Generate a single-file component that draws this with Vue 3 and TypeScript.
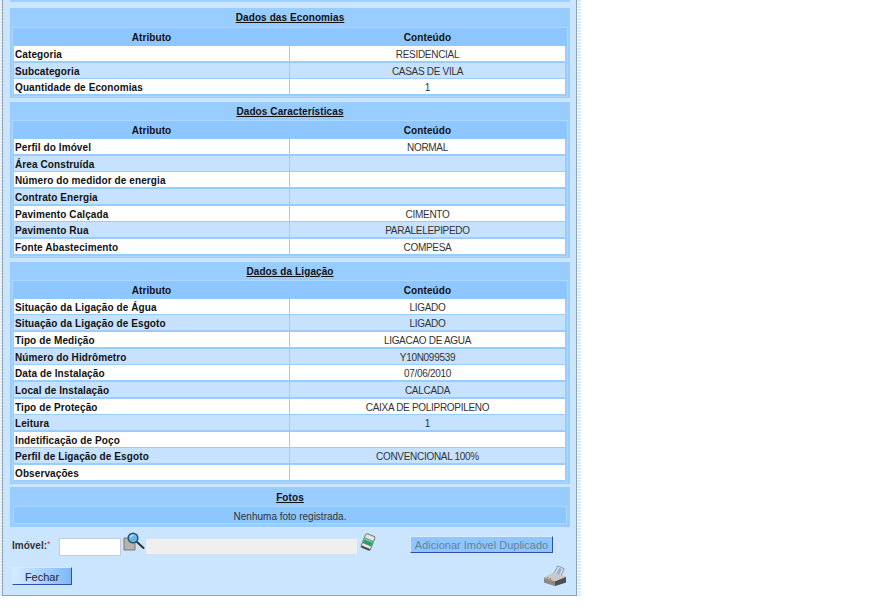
<template>
  <div class="page">
    <div class="shell">
      <div class="panel">
        <div class="stub"></div>

        <section v-for="sec in sections" :key="sec.title" class="sec" :class="sec.cls">
          <h3 class="sec__title"><span>{{ sec.title }}</span></h3>
          <div class="tbl">
            <div class="tbl__head">
              <div>Atributo</div>
              <div>Conteúdo</div>
            </div>
            <div v-for="(row, i) in sec.rows" :key="row[0]" class="tbl__row" :class="{ 'tbl__row--alt': i % 2 === 1 }">
              <div class="tbl__k">{{ row[0] }}</div>
              <div class="tbl__v">{{ row[1] }}</div>
            </div>
          </div>
        </section>

        <section class="sec sec--fotos">
          <h3 class="sec__title"><span>Fotos</span></h3>
          <div class="fotos__msg">Nenhuma foto registrada.</div>
        </section>

        <div class="imovel">
          <label class="imovel__label">Imóvel:<em>*</em></label>
          <input class="imovel__code" type="text" />
          <svg class="imovel__search" width="22" height="19" viewBox="0 0 22 19">
            <path d="M1 6h9l2 2v10H1z" fill="#b4b4ae" stroke="#7a7a72" stroke-width="1" />
            <path d="M14 10l6.500 6" stroke="#2f3438" stroke-width="2" stroke-linecap="round" />
            <circle cx="10" cy="6" r="4.800" fill="#6fb4dc" stroke="#1f5c85" stroke-width="1.600" />
            <path d="M7.500 5.500a3 3 0 0 1 3-2" stroke="#d8eefa" stroke-width="1.200" fill="none" />
          </svg>
          <input class="imovel__desc" type="text" disabled />
          <svg class="imovel__eraser" width="16" height="18" viewBox="0 0 16 18">
            <g transform="rotate(22 8 9)">
              <rect x="3" y="1.500" width="10" height="15" rx="2" fill="#e4e6e4" stroke="#77807c" stroke-width="1" />
              <rect x="3.500" y="6" width="9" height="6" fill="#2f9a6a" />
              <path d="M3.500 7.500h9" stroke="#8fd0ae" stroke-width="1.200" />
              <path d="M3.500 15.500h9" stroke="#3c4442" stroke-width="1.600" />
            </g>
          </svg>
          <button class="btn btn--off" type="button" disabled>Adicionar Imóvel Duplicado</button>
        </div>

        <div class="foot">
          <button class="btn btn--close" type="button">Fechar</button>
          <svg class="foot__print" width="24" height="22" viewBox="0 0 26 24">
            <path d="M11 11L16 1l7 3-4 9z" fill="#d9e0ea" stroke="#8a9099" stroke-width="1" />
            <path d="M14 10l3.500-7 3 1.300-3 6.700z" fill="#8fb2dc" />
            <path d="M1 14l11-6 13 5v6l-12 4-12-4z" fill="#a8a8a8" />
            <path d="M1 14l12 4 12-5-13-5z" fill="#c9c9c9" />
            <path d="M13 18v5l12-4v-6z" fill="#4f4f4f" />
            <path d="M1 14v5l12 4v-5z" fill="#8a8a8a" />
            <circle cx="5" cy="14" r="0.900" fill="#4fa84f" />
            <circle cx="8" cy="15" r="0.900" fill="#c85a4a" />
          </svg>
        </div>
      </div>
    </div>
  </div>
</template>

<script setup lang="ts">
interface Section {
  title: string;
  cls: string;
  rows: [string, string][];
}

const sections: Section[] = [
  {
    title: 'Dados das Economias',
    cls: 'sec--eco',
    rows: [
      ['Categoria', 'RESIDENCIAL'],
      ['Subcategoria', 'CASAS DE VILA'],
      ['Quantidade de Economias', '1'],
    ],
  },
  {
    title: 'Dados Características',
    cls: 'sec--car',
    rows: [
      ['Perfil do Imóvel', 'NORMAL'],
      ['Área Construída', ''],
      ['Número do medidor de energia', ''],
      ['Contrato Energia', ''],
      ['Pavimento Calçada', 'CIMENTO'],
      ['Pavimento Rua', 'PARALELEPIPEDO'],
      ['Fonte Abastecimento', 'COMPESA'],
    ],
  },
  {
    title: 'Dados da Ligação',
    cls: 'sec--lig',
    rows: [
      ['Situação da Ligação de Água', 'LIGADO'],
      ['Situação da Ligação de Esgoto', 'LIGADO'],
      ['Tipo de Medição', 'LIGACAO DE AGUA'],
      ['Número do Hidrômetro', 'Y10N099539'],
      ['Data de Instalação', '07/06/2010'],
      ['Local de Instalação', 'CALCADA'],
      ['Tipo de Proteção', 'CAIXA DE POLIPROPILENO'],
      ['Leitura', '1'],
      ['Indetificação de Poço', ''],
      ['Perfil de Ligação de Esgoto', 'CONVENCIONAL 100%'],
      ['Observações', ''],
    ],
  },
];
</script>

<style>
html,
body {
  background: #fff;
  overflow: hidden;
}
</style>

<style scoped>
.page {
  width: 882px;
  height: 616px;
  overflow: hidden;
  font-family: 'Liberation Sans', Arial, sans-serif;
  color: #111;
}

.shell {
  box-sizing: border-box;
  width: 581px;
  height: 596px;
  padding: 0 4px 0 2px;
  background: repeating-linear-gradient(180deg, #dcebfa 0, #dcebfa 2px, #fff 2px, #fff 3px);
}

.panel {
  box-sizing: border-box;
  width: 575px;
  height: 596px;
  padding: 0 6px 0 7px;
  background: #cbe5ff;
  border-left: 1px solid #8fa3b5;
  border-right: 1px solid #8fa3b5;
  border-bottom: 1px solid #8fa3b5;
}

.stub {
  box-sizing: border-box;
  height: 2px;
  margin-bottom: 6px;
  background: #99ccff;
  border-bottom: 1px solid #a9d4ff;
}

.sec {
  background: #99ccff;
  padding: 0 2px 1px;
  margin-bottom: 4px;
}

.sec--lig {
  margin-bottom: 3.400px;
}

.sec__title {
  margin: 0;
  height: 19px;
  font-size: 10px;
  font-weight: bold;
  line-height: 19px;
  text-align: center;
  text-decoration: underline;
  letter-spacing: 0.010em;
}

.sec--car .sec__title,
.sec--lig .sec__title {
  height: 18px;
  line-height: 20px;
}

.sec--fotos .sec__title {
  line-height: 21px;
}

.tbl {
  border: 1px solid #aed7ff;
  padding: 0 1px;
  background: #99ccff;
}

.tbl__head,
.tbl__row {
  display: grid;
  grid-template-columns: 275px 275px;
  column-gap: 1px;
}

.tbl__head {
  height: 18px;
  line-height: 20px;
  font-size: 10px;
  font-weight: bold;
  letter-spacing: 0.010em;
  text-align: center;
  background: #8ec6ff;
  margin: 0 -1px;
  padding: 0 1px;
}

.tbl__row {
  height: 16.670px;
  line-height: 17px;
  font-size: 10px;
}

.tbl__row > div {
  background: #fff;
  margin-bottom: 1.670px;
  overflow: visible;
  height: 15px;
}

.tbl__row--alt > div {
  background: #c6e2ff;
}

.tbl__k {
  padding-left: 1px;
  font-weight: bold;
  letter-spacing: 0.010em;
  white-space: nowrap;
}

.tbl__v {
  text-align: center;
  letter-spacing: -0.030em;
  color: #333;
}

.sec--fotos {
  padding-bottom: 3px;
  margin-bottom: 0;
}

.fotos__msg {
  box-sizing: border-box;
  height: 18px;
  line-height: 19px;
  margin: 0 1px;
  border: 1px solid #aed7ff;
  background: #8ec6ff;
  font-size: 10px;
  text-align: center;
  color: #333;
}

.imovel {
  display: flex;
  align-items: flex-start;
  height: 30px;
  padding: 10px 0 0 2px;
}

.imovel__label {
  width: 47px;
  margin-top: 2px;
  font-size: 10px;
  font-weight: bold;
  color: #333;
}

.imovel__label em {
  color: #d33;
  font-size: 9px;
  font-style: normal;
  font-weight: normal;
  vertical-align: 2px;
}

.imovel__code {
  box-sizing: border-box;
  width: 62px;
  height: 18px;
  margin: 1px 0 0;
  border: 1px solid #c3ccd6;
  background: #fff;
  padding: 0;
}

.imovel__search {
  margin: -5px 0 0 2px;
}

.imovel__desc {
  box-sizing: border-box;
  width: 211px;
  height: 15px;
  margin: 2px 0 0 1px;
  border: 0;
  padding: 0;
  background: #efefef;
}

.imovel__eraser {
  margin: -4px 0 0 3px;
}

.btn {
  box-sizing: border-box;
  padding: 0;
  font-family: inherit;
  font-size: 11px;
  background: #8ec6ff;
  border: 1px solid;
  border-color: #d7ebff #2f4fa8 #2f4fa8 #d7ebff;
}

.btn--off {
  width: 143px;
  height: 17px;
  margin: -1px 0 0 34px;
  color: #6b7f94;
}

.foot {
  display: flex;
  justify-content: space-between;
  align-items: flex-start;
  padding: 0 3px 0 2px;
}

.btn--close {
  width: 60px;
  height: 18px;
  padding-top: 1px;
  font-size: 11px;
  color: #223;
  background: linear-gradient(90deg, #d5ebff 0%, #a9d4ff 50%, #7db8f5 100%);
}

.foot__print {
  margin: -2px 0 0;
}
</style>
